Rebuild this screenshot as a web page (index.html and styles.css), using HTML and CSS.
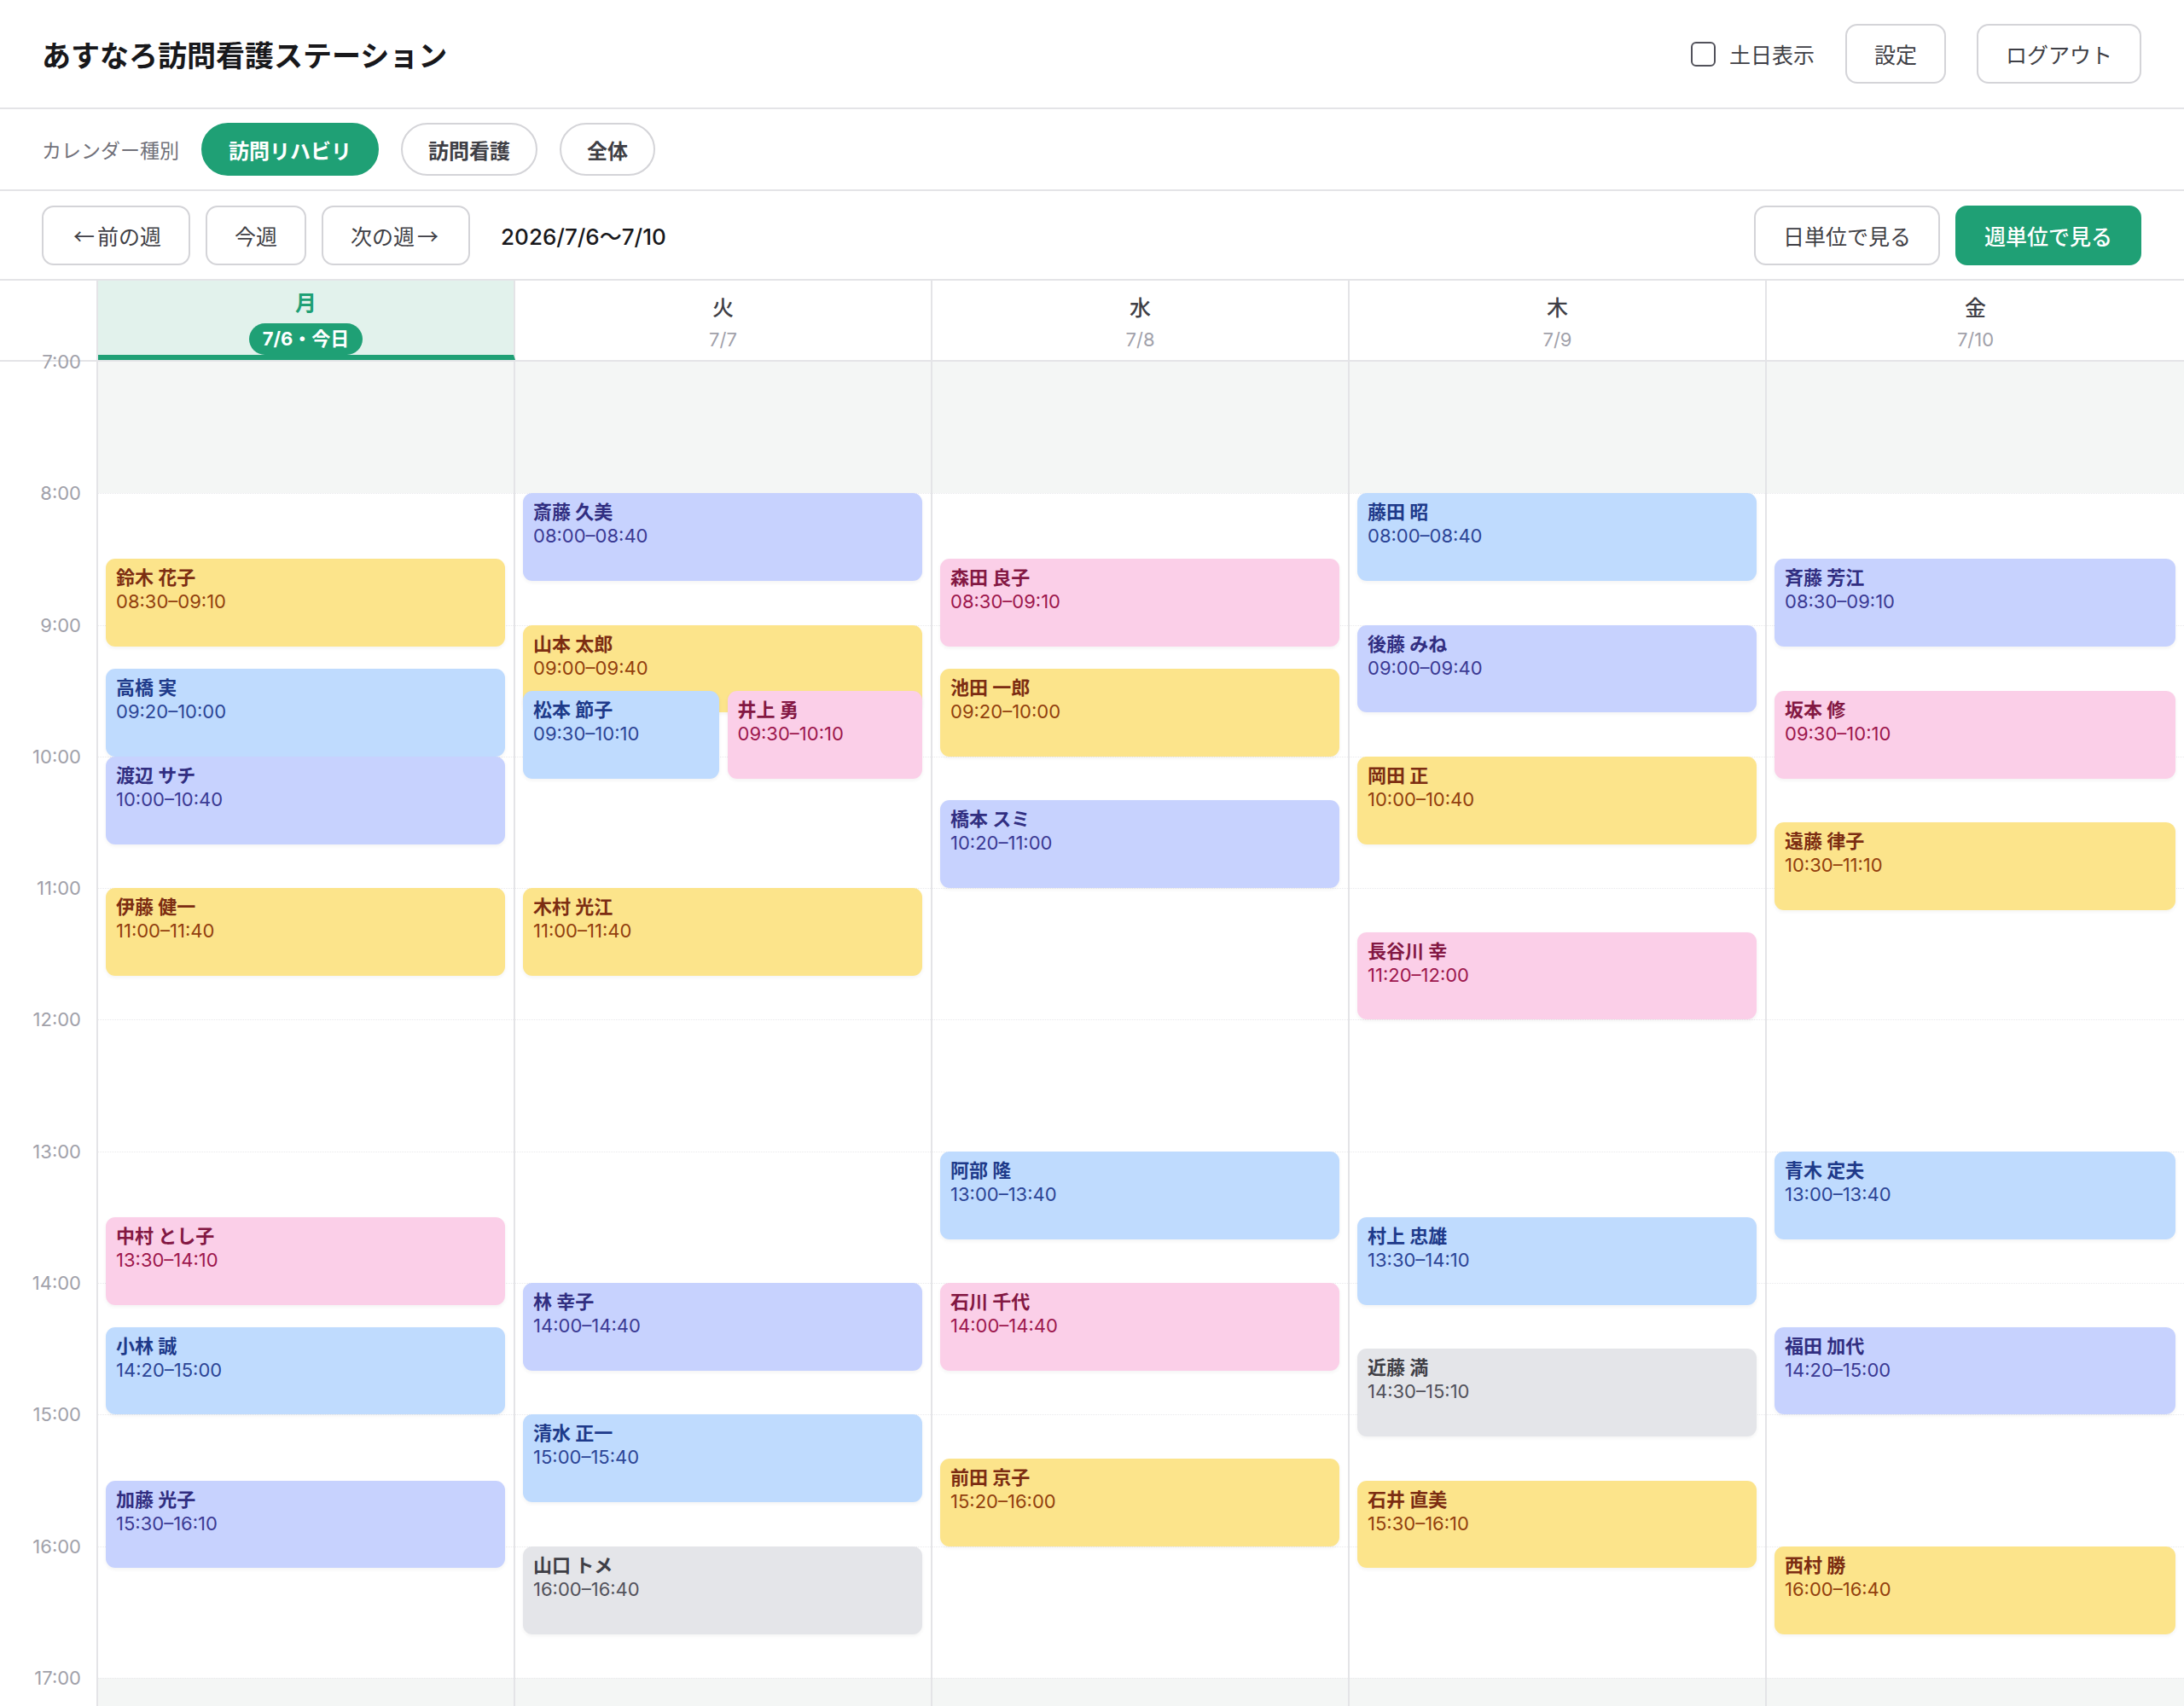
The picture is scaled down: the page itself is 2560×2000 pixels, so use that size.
FILE: index.html
```html
<html>
  <head>
    <meta charset="utf-8">
    <title>あすなろ訪問看護ステーション</title>
    <link rel="stylesheet" href="styles.css">
  </head>
<body>

  <header class="topbar">
    <h1 class="title">あすなろ訪問看護ステーション</h1>
    <div class="actions">
      <label class="check"><span class="box"></span>土日表示</label>
      <button class="btn">設定</button>
      <button class="btn">ログアウト</button>
    </div>
  </header>

  <div class="typebar">
    <span class="type-label">カレンダー種別</span>
    <button class="pill active">訪問リハビリ</button>
    <button class="pill">訪問看護</button>
    <button class="pill">全体</button>
  </div>

  <div class="navbar">
    <div class="nav-left">
      <button class="btn"><span class="arrow">←</span>前の週</button>
      <button class="btn">今週</button>
      <button class="btn">次の週<span class="arrow">→</span></button>
      <span class="range">2026/7/6〜7/10</span>
    </div>
    <div class="nav-right">
      <button class="btn">日単位で見る</button>
      <button class="btn primary">週単位で見る</button>
    </div>
  </div>

  <div class="calendar">
    <div class="cal-head">
      <div class="gutter-head"></div>
      <div class="day-head today">
        <span class="wd">月</span>
        <span class="badge">7/6・今日</span>
      </div>
      <div class="day-head"><span class="wd">火</span><span class="date">7/7</span></div>
      <div class="day-head"><span class="wd">水</span><span class="date">7/8</span></div>
      <div class="day-head"><span class="wd">木</span><span class="date">7/9</span></div>
      <div class="day-head"><span class="wd">金</span><span class="date">7/10</span></div>
    </div>

    <div class="cal-body">
      <div class="gutter">
        <div class="hour"><span>7:00</span></div>
        <div class="hour"><span>8:00</span></div>
        <div class="hour"><span>9:00</span></div>
        <div class="hour"><span>10:00</span></div>
        <div class="hour"><span>11:00</span></div>
        <div class="hour"><span>12:00</span></div>
        <div class="hour"><span>13:00</span></div>
        <div class="hour"><span>14:00</span></div>
        <div class="hour"><span>15:00</span></div>
        <div class="hour"><span>16:00</span></div>
        <div class="hour"><span>17:00</span></div>
      </div>

      <!-- 月 -->
      <div class="day">
        <div class="slot off"></div><div class="slot"></div><div class="slot"></div><div class="slot"></div><div class="slot"></div><div class="slot"></div><div class="slot"></div><div class="slot"></div><div class="slot"></div><div class="slot"></div><div class="slot off"></div>
        <div class="ev yellow" style="--s:90"><b>鈴木 花子</b><span>08:30–09:10</span></div>
        <div class="ev blue" style="--s:140"><b>高橋 実</b><span>09:20–10:00</span></div>
        <div class="ev indigo" style="--s:180"><b>渡辺 サチ</b><span>10:00–10:40</span></div>
        <div class="ev yellow" style="--s:240"><b>伊藤 健一</b><span>11:00–11:40</span></div>
        <div class="ev pink" style="--s:390"><b>中村 とし子</b><span>13:30–14:10</span></div>
        <div class="ev blue" style="--s:440"><b>小林 誠</b><span>14:20–15:00</span></div>
        <div class="ev indigo" style="--s:510"><b>加藤 光子</b><span>15:30–16:10</span></div>
      </div>

      <!-- 火 -->
      <div class="day">
        <div class="slot off"></div><div class="slot"></div><div class="slot"></div><div class="slot"></div><div class="slot"></div><div class="slot"></div><div class="slot"></div><div class="slot"></div><div class="slot"></div><div class="slot"></div><div class="slot off"></div>
        <div class="ev indigo" style="--s:60"><b>斎藤 久美</b><span>08:00–08:40</span></div>
        <div class="ev yellow" style="--s:120"><b>山本 太郎</b><span>09:00–09:40</span></div>
        <div class="ev blue half-l" style="--s:150"><b>松本 節子</b><span>09:30–10:10</span></div>
        <div class="ev pink half-r" style="--s:150"><b>井上 勇</b><span>09:30–10:10</span></div>
        <div class="ev yellow" style="--s:240"><b>木村 光江</b><span>11:00–11:40</span></div>
        <div class="ev indigo" style="--s:420"><b>林 幸子</b><span>14:00–14:40</span></div>
        <div class="ev blue" style="--s:480"><b>清水 正一</b><span>15:00–15:40</span></div>
        <div class="ev gray" style="--s:540"><b>山口 トメ</b><span>16:00–16:40</span></div>
      </div>

      <!-- 水 -->
      <div class="day">
        <div class="slot off"></div><div class="slot"></div><div class="slot"></div><div class="slot"></div><div class="slot"></div><div class="slot"></div><div class="slot"></div><div class="slot"></div><div class="slot"></div><div class="slot"></div><div class="slot off"></div>
        <div class="ev pink" style="--s:90"><b>森田 良子</b><span>08:30–09:10</span></div>
        <div class="ev yellow" style="--s:140"><b>池田 一郎</b><span>09:20–10:00</span></div>
        <div class="ev indigo" style="--s:200"><b>橋本 スミ</b><span>10:20–11:00</span></div>
        <div class="ev blue" style="--s:360"><b>阿部 隆</b><span>13:00–13:40</span></div>
        <div class="ev pink" style="--s:420"><b>石川 千代</b><span>14:00–14:40</span></div>
        <div class="ev yellow" style="--s:500"><b>前田 京子</b><span>15:20–16:00</span></div>
      </div>

      <!-- 木 -->
      <div class="day">
        <div class="slot off"></div><div class="slot"></div><div class="slot"></div><div class="slot"></div><div class="slot"></div><div class="slot"></div><div class="slot"></div><div class="slot"></div><div class="slot"></div><div class="slot"></div><div class="slot off"></div>
        <div class="ev blue" style="--s:60"><b>藤田 昭</b><span>08:00–08:40</span></div>
        <div class="ev indigo" style="--s:120"><b>後藤 みね</b><span>09:00–09:40</span></div>
        <div class="ev yellow" style="--s:180"><b>岡田 正</b><span>10:00–10:40</span></div>
        <div class="ev pink" style="--s:260"><b>長谷川 幸</b><span>11:20–12:00</span></div>
        <div class="ev blue" style="--s:390"><b>村上 忠雄</b><span>13:30–14:10</span></div>
        <div class="ev gray" style="--s:450"><b>近藤 満</b><span>14:30–15:10</span></div>
        <div class="ev yellow" style="--s:510"><b>石井 直美</b><span>15:30–16:10</span></div>
      </div>

      <!-- 金 -->
      <div class="day">
        <div class="slot off"></div><div class="slot"></div><div class="slot"></div><div class="slot"></div><div class="slot"></div><div class="slot"></div><div class="slot"></div><div class="slot"></div><div class="slot"></div><div class="slot"></div><div class="slot off"></div>
        <div class="ev indigo" style="--s:90"><b>斉藤 芳江</b><span>08:30–09:10</span></div>
        <div class="ev pink" style="--s:150"><b>坂本 修</b><span>09:30–10:10</span></div>
        <div class="ev yellow" style="--s:210"><b>遠藤 律子</b><span>10:30–11:10</span></div>
        <div class="ev blue" style="--s:360"><b>青木 定夫</b><span>13:00–13:40</span></div>
        <div class="ev indigo" style="--s:440"><b>福田 加代</b><span>14:20–15:00</span></div>
        <div class="ev yellow" style="--s:540"><b>西村 勝</b><span>16:00–16:40</span></div>
      </div>
    </div>
  </div>

</body>
</html>
```

FILE: styles.css
```css
body {
  margin: 0;
  font-family: Inter, "Noto Sans CJK JP", sans-serif;
  color: #18181b;
  background: #fff;
  --green: #1fa075;
  --line: #e4e4e7;
  --hour: 154.3px;
}

button {
  font-family: inherit;
  cursor: pointer;
}

/* top bars */

.topbar {
  display: flex;
  align-items: center;
  justify-content: space-between;
  height: 126px;
  padding: 0 50px 0 49px;
  border-bottom: 2px solid var(--line);
}

.title {
  margin: 0;
  font-size: 34px;
  font-weight: 700;
  color: #18181b;
}

.actions {
  display: flex;
  align-items: center;
  gap: 36px;
}

.check {
  display: flex;
  align-items: center;
  gap: 16px;
  font-size: 25px;
  color: #3f3f46;
}

.check .box {
  width: 29px;
  height: 29px;
  box-sizing: border-box;
  border: 2px solid #52525b;
  border-radius: 6px;
}

.btn {
  height: 70px;
  padding: 0 32px;
  border: 2px solid #d4d4d8;
  border-radius: 14px;
  background: #fff;
  font-size: 25px;
  color: #3f3f46;
}

.btn .arrow {
  font-family: "Noto Sans CJK JP", sans-serif;
  margin: 0 3px;
}

.btn.primary {
  background: var(--green);
  border-color: var(--green);
  color: #fff;
  font-weight: 500;
}

.typebar {
  display: flex;
  align-items: center;
  gap: 26px;
  height: 94px;
  padding: 0 49px;
  border-bottom: 2px solid var(--line);
}

.type-label {
  font-size: 23px;
  color: #71717a;
}

.pill {
  height: 62px;
  padding: 0 30px;
  border: 2px solid #d4d4d8;
  border-radius: 31px;
  background: #fff;
  font-size: 24px;
  font-weight: 600;
  color: #3f3f46;
}

.pill.active {
  background: var(--green);
  border-color: var(--green);
  color: #fff;
}

.navbar {
  display: flex;
  align-items: center;
  justify-content: space-between;
  height: 103px;
  padding: 0 50px 0 49px;
  border-bottom: 2px solid var(--line);
}

.nav-left,
.nav-right {
  display: flex;
  align-items: center;
  gap: 18px;
}

.range {
  margin-left: 18px;
  font-size: 26px;
  font-weight: 500;
  color: #18181b;
}

/* calendar */

.cal-head,
.cal-body {
  display: grid;
  grid-template-columns: 115px repeat(5, 1fr);
}

.cal-head {
  border-bottom: 2px solid var(--line);
}

.gutter-head {
  border-right: 2px solid var(--line);
}

.day-head {
  display: flex;
  flex-direction: column;
  align-items: center;
  height: 93px;
  box-sizing: border-box;
  padding-top: 14px;
  border-right: 2px solid var(--line);
}

.day-head:last-child,
.day:last-child {
  border-right: none;
}

.day-head .wd {
  font-size: 25px;
  line-height: 36px;
  font-weight: 500;
  color: #3f3f46;
}

.day-head .date {
  font-size: 22px;
  line-height: 38px;
  color: #a1a1aa;
}

.day-head.today {
  padding-top: 8px;
  background: #e2f2ec;
  border-bottom: 6px solid var(--green);
}

.day-head.today .wd {
  color: var(--green);
  font-weight: 700;
}

.badge {
  margin-top: 6px;
  height: 37px;
  padding: 0 16px;
  border-radius: 19px;
  background: var(--green);
  color: #fff;
  font-size: 22px;
  font-weight: 700;
  line-height: 37px;
}

.gutter {
  border-right: 2px solid var(--line);
}

.hour {
  height: var(--hour);
}

.hour span {
  display: block;
  padding-right: 18px;
  text-align: right;
  font-size: 22px;
  line-height: 28px;
  color: #a1a1aa;
  transform: translateY(-50%);
}

.day {
  position: relative;
  border-right: 2px solid var(--line);
}

.slot {
  height: var(--hour);
  box-sizing: border-box;
  border-top: 1px dotted #e9e9ec;
}

.slot:first-child {
  border-top: none;
}

.slot.off {
  background: #f4f6f5;
}

/* events */

.ev {
  position: absolute;
  left: 9px;
  right: 10px;
  top: calc(var(--s) * var(--hour) / 60);
  height: calc(40 * var(--hour) / 60);
  box-sizing: border-box;
  padding: 8px 12px;
  border-radius: 11px;
  box-shadow: 0 2px 4px rgba(0, 0, 0, 0.05);
}

.ev b {
  display: block;
  font-size: 22px;
  line-height: 28px;
  font-weight: 700;
}

.ev span {
  display: block;
  font-size: 22px;
  line-height: 28px;
}

.ev.half-l {
  right: calc(50% + 5px);
}

.ev.half-r {
  left: calc(50% + 5px);
}

.yellow { background: #fce48b; }
.yellow b { color: #7c2d12; }
.yellow span { color: #92400e; }

.blue { background: #bfdbfe; }
.blue b { color: #1e3a8a; }
.blue span { color: #2c4596; }

.indigo { background: #c7d2fe; }
.indigo b { color: #312e81; }
.indigo span { color: #3b3a94; }

.pink { background: #fbcfe8; }
.pink b { color: #831843; }
.pink span { color: #9d174d; }

.gray { background: #e4e5e9; }
.gray b { color: #3f3f46; }
.gray span { color: #52525b; }
```
